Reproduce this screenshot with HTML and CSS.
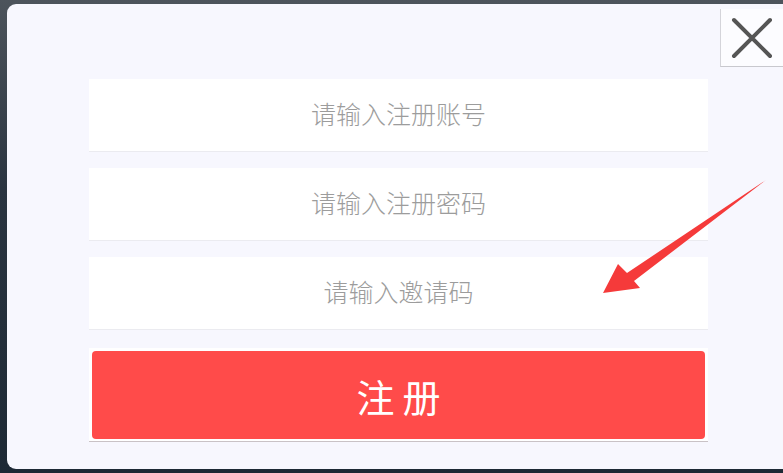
FILE: index.html
```html
<!DOCTYPE html>
<html lang="zh-CN">
<head>
  <meta charset="UTF-8">
  <title>注册</title>
  <link rel="stylesheet" href="styles.css">
</head>
<body>

  <div class="dialog">
    <button class="close-btn" aria-label="关闭">
      <svg width="42" height="42" viewBox="0 0 42 42">
        <path d="M3 3 L39 39 M39 3 L3 39" stroke="#555" stroke-width="4" stroke-linecap="round"/>
      </svg>
    </button>

    <form class="reg-form">
      <input type="text" class="reg-input" placeholder="请输入注册账号">
      <input type="password" class="reg-input" placeholder="请输入注册密码">
      <input type="text" class="reg-input" placeholder="请输入邀请码">
      <div class="btn-wrap">
        <button type="button" class="reg-btn">注册</button>
      </div>
    </form>

    <svg class="hint-arrow" width="180" height="130" viewBox="0 0 180 130">
      <path d="M177 3 L45 104 L51 111 L14 116 L29 87 L38 96 Z" fill="#f53a3a"/>
    </svg>
  </div>

</body>
</html>
```

FILE: styles.css
```css
body {
  margin: 0;
  height: 473px;
  overflow: hidden;
  background: linear-gradient(#4d545c, #2a3440 40%, #1d2935);
  font-family: "Noto Sans CJK SC", "Noto Sans", sans-serif;
}

.dialog {
  position: relative;
  margin: 4px -10px 0 7px;
  height: 465px;
  background: #f7f7fe;
  border-radius: 9px;
  box-sizing: border-box;
  padding: 75px 0 0 82px;
}

.close-btn {
  position: absolute;
  top: 5px;
  right: 10px;
  width: 63px;
  height: 58px;
  padding: 0;
  border: none;
  border-left: 1px solid #d4d4da;
  border-bottom: 1px solid #c8c8ce;
  background: #fcfcff;
  display: flex;
  align-items: center;
  justify-content: center;
  cursor: pointer;
}

.reg-form {
  width: 619px;
  display: flex;
  flex-direction: column;
  gap: 16px;
}

.reg-input {
  height: 73px;
  margin: 0;
  padding: 0 0 4px;
  border: none;
  border-bottom: 1px solid #ebebf0;
  background: #fff;
  text-align: center;
  font-family: "Noto Sans CJK SC", "Noto Sans", sans-serif;
  font-size: 25px;
  font-weight: 300;
  color: #666;
  outline: none;
  box-sizing: border-box;
}

.reg-input::placeholder {
  color: #9c9c9c;
}

.btn-wrap {
  margin-top: 2px;
  padding: 3px 3px 2px 3px;
  background: #fff;
  border-bottom: 1px solid #c9c2c6;
}

.reg-btn {
  display: block;
  width: 100%;
  height: 88px;
  border: none;
  border-radius: 4px;
  background: #ff4b4a;
  color: #fff;
  font-family: "Noto Sans CJK SC", "Noto Sans", sans-serif;
  font-size: 38px;
  font-weight: 400;
  letter-spacing: 8px;
  text-indent: 8px;
  cursor: pointer;
}

.hint-arrow {
  position: absolute;
  left: 582px;
  top: 173px;
}
```
